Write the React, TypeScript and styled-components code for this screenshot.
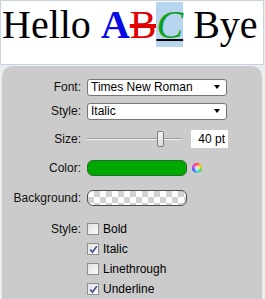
import React from 'react';
import styled, { createGlobalStyle } from 'styled-components';

const GlobalStyle = createGlobalStyle`
  html, body {
    margin: 0;
    padding: 0;
    background: #eaeef1;
    overflow: hidden;
  }
  body {
    font-family: "Liberation Sans", Arial, sans-serif;
    font-size: 12px;
    color: #111;
  }
`;

const Page = styled.div`
  width: 265px;
  height: 299px;
  display: flex;
  flex-direction: column;
`;

const Preview = styled.div`
  box-sizing: border-box;
  width: 264px;
  height: 67px;
  border: 1px solid #c6d5df;
  background: #fff;
  padding: 0 1px;
  font-family: "Liberation Serif", "Times New Roman", serif;
  font-size: 40px;
  white-space: nowrap;
  color: #000;
`;

const BoldBlue = styled.span`
  font-weight: bold;
  color: #0a0ae6;
`;

const StrikeRed = styled.span`
  color: #e00000;
  text-decoration: line-through;
  text-decoration-color: #e00000;
`;

const Highlighted = styled.span`
  color: #10a020;
  font-style: italic;
  background: #b8d5f0;
  text-decoration: underline;
  text-decoration-color: #000;
  text-decoration-thickness: 2px;
`;

const Panel = styled.div`
  margin: 1px 0 0 2px;
  width: 260px;
  flex: 1;
  background: #cbcbcb;
  border-radius: 10px 10px 0 0;
  padding-top: 9px;
  display: flex;
  flex-direction: column;
`;

const Row = styled.div<{ $h: number }>`
  display: grid;
  grid-template-columns: 79px 1fr;
  column-gap: 6px;
  height: ${p => p.$h}px;
  align-items: center;
`;

const Label = styled.div`
  text-align: right;
  color: #111;
`;

const Select = styled.div`
  box-sizing: border-box;
  width: 140px;
  height: 17px;
  background: #fff;
  border: 1px solid #767676;
  border-radius: 3px;
  padding: 0 6px 0 3px;
  display: flex;
  align-items: center;
  justify-content: space-between;
  color: #000;
`;

const Arrow = styled.span`
  width: 0;
  height: 0;
  border-left: 3.5px solid transparent;
  border-right: 3.5px solid transparent;
  border-top: 4px solid #000;
`;

const Inline = styled.div<{ $gap: number }>`
  display: flex;
  align-items: center;
  gap: ${p => p.$gap}px;
`;

const Slider = styled.div`
  position: relative;
  width: 95px;
  height: 16px;
`;

const Track = styled.div`
  margin-top: 7px;
  height: 1px;
  background: #9a9a9a;
  border-bottom: 1px solid #f4f4f4;
`;

const Thumb = styled.div`
  position: absolute;
  left: 70px;
  top: 0;
  box-sizing: border-box;
  width: 7px;
  height: 16px;
  border: 1px solid #7d7d7d;
  border-radius: 2px;
  background: linear-gradient(#f6f6f6, #dcdcdc);
`;

const NumberBox = styled.div`
  box-sizing: border-box;
  width: 37px;
  height: 18px;
  background: #fff;
  text-align: right;
  padding-right: 3px;
  line-height: 18px;
  color: #000;
`;

const Swatch = styled.div<{ $checker?: boolean }>`
  box-sizing: border-box;
  width: 100px;
  height: 16px;
  border-radius: 6px;
  border: 1px solid ${p => (p.$checker ? '#4e4e4e' : '#2c6a2c')};
  background: ${p =>
    p.$checker
      ? 'repeating-conic-gradient(#d2d2d2 0 25%, #ffffff 0 50%) 0 0 / 12px 12px'
      : '#00a800'};
`;

const Wheel = styled.div`
  width: 10px;
  height: 10px;
  border-radius: 50%;
  background:
    radial-gradient(circle, #fff 0, rgba(255,255,255,0.6) 25%, rgba(255,255,255,0) 60%),
    conic-gradient(#ff3030, #ffd000, #30e030, #20d0ff, #3040ff, #e030e0, #ff3030);
`;

const Checks = styled.div`
  display: grid;
  grid-template-columns: 79px 1fr;
  column-gap: 6px;
  margin-top: 4px;
`;

const CheckList = styled.div`
  display: flex;
  flex-direction: column;
`;

const CheckRow = styled.label`
  height: 20px;
  display: flex;
  align-items: center;
  gap: 4px;
  color: #000;
`;

const Box = styled.span<{ $on: boolean }>`
  box-sizing: border-box;
  width: 12px;
  height: 12px;
  border: 1px solid #8e8e8e;
  background: linear-gradient(135deg, #e2e2e2, #fbfbfb);
  display: flex;
  align-items: center;
  justify-content: center;
`;

const StyleLabel = styled(Label)`
  height: 20px;
  line-height: 20px;
`;

function Check({ on, text }: { on: boolean; text: string }) {
  return (
    <CheckRow>
      <Box $on={on}>
        {on && (
          <svg width="9" height="9" viewBox="0 0 9 9">
            <path d="M1.2 4.6 L3.4 7.2 L7.8 1.2" fill="none" stroke="#3d4f86" strokeWidth="1.6" />
          </svg>
        )}
      </Box>
      {text}
    </CheckRow>
  );
}

const STYLE_OPTIONS = [
  { text: 'Bold', on: false },
  { text: 'Italic', on: true },
  { text: 'Linethrough', on: false },
  { text: 'Underline', on: true },
];

export default function App() {
  return (
    <Page>
      <GlobalStyle />
      <Preview>
        Hello <BoldBlue>A</BoldBlue><StrikeRed>B</StrikeRed><Highlighted>C</Highlighted> Bye
      </Preview>
      <Panel>
        <Row $h={24}>
          <Label>Font:</Label>
          <Select>Times New Roman<Arrow /></Select>
        </Row>
        <Row $h={24}>
          <Label>Style:</Label>
          <Select>Italic<Arrow /></Select>
        </Row>
        <Row $h={32}>
          <Label>Size:</Label>
          <Inline $gap={9}>
            <Slider>
              <Track />
              <Thumb />
            </Slider>
            <NumberBox>40 pt</NumberBox>
          </Inline>
        </Row>
        <Row $h={26}>
          <Label>Color:</Label>
          <Inline $gap={5}>
            <Swatch />
            <Wheel />
          </Inline>
        </Row>
        <Row $h={34}>
          <Label>Background:</Label>
          <Swatch $checker />
        </Row>
        <Checks>
          <StyleLabel>Style:</StyleLabel>
          <CheckList>
            {STYLE_OPTIONS.map(o => (
              <Check key={o.text} on={o.on} text={o.text} />
            ))}
          </CheckList>
        </Checks>
      </Panel>
    </Page>
  );
}
